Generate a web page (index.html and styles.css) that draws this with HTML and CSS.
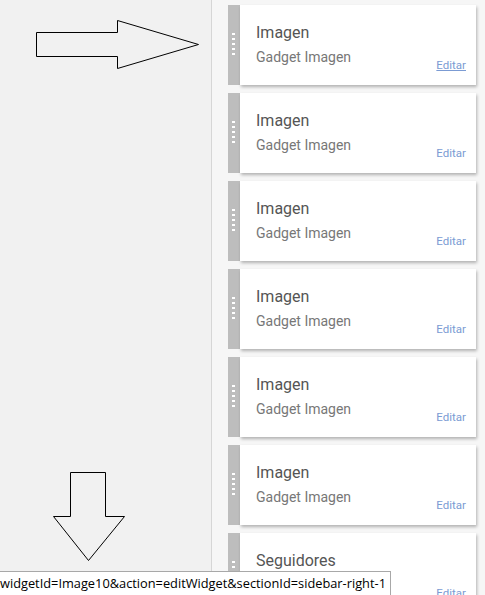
FILE: index.html
```html
<!DOCTYPE html>
<html lang="es">
<head>
<meta charset="utf-8">
<link rel="stylesheet" href="styles.css">
</head>
<body>
<div class="page">
  <div class="left">
    <svg class="arrows" width="211" height="595" viewBox="0 0 211 595">
      <polygon points="36.5,32.5 117.5,32.5 117.5,20.5 198.5,44.5 117.5,68.5 117.5,56.5 36.5,56.5" fill="none" stroke="#000" stroke-width="1"/>
      <polygon points="70.5,472.5 105.5,472.5 105.5,516.5 124.5,516.5 88.5,560.5 53.5,516.5 70.5,516.5" fill="none" stroke="#000" stroke-width="1"/>
    </svg>
  </div>
  <div class="right">
    <div class="widget hover"><div class="grip"><i></i><i></i><i></i><i></i><i></i></div><div class="card"><div class="title">Imagen</div><div class="sub">Gadget Imagen</div><a class="edit">Editar</a></div></div>
    <div class="widget"><div class="grip"><i></i><i></i><i></i><i></i><i></i></div><div class="card"><div class="title">Imagen</div><div class="sub">Gadget Imagen</div><a class="edit">Editar</a></div></div>
    <div class="widget"><div class="grip"><i></i><i></i><i></i><i></i><i></i></div><div class="card"><div class="title">Imagen</div><div class="sub">Gadget Imagen</div><a class="edit">Editar</a></div></div>
    <div class="widget"><div class="grip"><i></i><i></i><i></i><i></i><i></i></div><div class="card"><div class="title">Imagen</div><div class="sub">Gadget Imagen</div><a class="edit">Editar</a></div></div>
    <div class="widget"><div class="grip"><i></i><i></i><i></i><i></i><i></i></div><div class="card"><div class="title">Imagen</div><div class="sub">Gadget Imagen</div><a class="edit">Editar</a></div></div>
    <div class="widget"><div class="grip"><i></i><i></i><i></i><i></i><i></i></div><div class="card"><div class="title">Imagen</div><div class="sub">Gadget Imagen</div><a class="edit">Editar</a></div></div>
    <div class="widget"><div class="grip"><i></i><i></i><i></i><i></i><i></i></div><div class="card"><div class="title">Seguidores</div><div class="sub">Gadget Seguidores</div><a class="edit">Editar</a></div></div>
  </div>
</div>
<div class="status">widgetId=Image10&amp;action=editWidget&amp;sectionId=sidebar-right-1</div>
</body>
</html>
```

FILE: styles.css
```css
html, body {
  margin: 0;
  padding: 0;
  height: 595px;
  overflow: hidden;
}
body {
  font-family: Roboto, "Liberation Sans", sans-serif;
  background: #f6f6f6;
  position: relative;
}
.page {
  display: flex;
  height: 595px;
}
.left {
  width: 211px;
  flex: none;
  background: #f1f1f1;
  border-right: 1px solid #d6d6d6;
  position: relative;
}
.arrows {
  position: absolute;
  left: 0;
  top: 0;
}
.right {
  flex: 1;
  padding: 5px 9px 0 16px;
  display: flex;
  flex-direction: column;
  gap: 8px;
}
.widget {
  display: flex;
  height: 80px;
  flex: none;
}
.grip {
  width: 12px;
  background: #bdbdbd;
  display: flex;
  flex-direction: column;
  align-items: flex-start;
  padding: 28px 0 0 4px;
  box-sizing: border-box;
  gap: 3px;
}
.grip i {
  display: block;
  width: 3px;
  height: 2px;
  background: #fff;
}
.card {
  flex: 1;
  background: #fff;
  box-shadow: 1px 2px 3px rgba(0,0,0,0.28);
  position: relative;
  padding: 18px 0 0 16px;
  box-sizing: border-box;
}
.title {
  font-size: 16px;
  color: #555;
  line-height: 20px;
}
.sub {
  font-size: 14px;
  color: #777;
  line-height: 18px;
  margin-top: 5px;
}
.edit {
  position: absolute;
  right: 10px;
  top: 53px;
  font-size: 11.5px;
  color: #7b9bd3;
  line-height: 14px;
  text-decoration: none;
}
.hover .edit {
  text-decoration: underline;
}
.status {
  position: absolute;
  left: 0;
  bottom: 0;
  width: 391px;
  height: 24px;
  box-sizing: border-box;
  background: #fff;
  border: 1px solid #a8a8a8;
  border-left: none;
  border-bottom: none;
  font-family: "Open Sans", "DejaVu Sans", sans-serif;
  font-size: 12.8px;
  line-height: 22px;
  color: #000;
  white-space: nowrap;
  overflow: hidden;
  padding-left: 0;
}
```
